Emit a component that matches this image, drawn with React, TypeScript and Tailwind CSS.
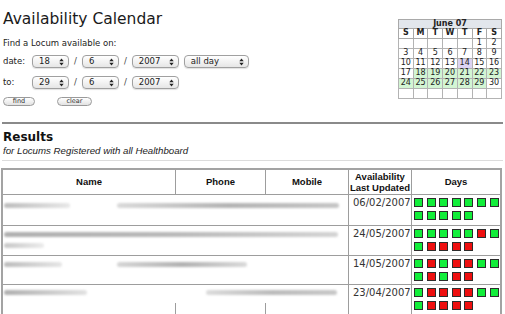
import React from "react"

const sans = "font-['DejaVu_Sans',sans-serif]"
const arial = "font-['Liberation_Sans',Arial,sans-serif]"

function Arrows() {
  return (
    <svg width="5" height="8" viewBox="0 0 5 8" className="shrink-0">
      <polygon points="0.3,3.2 2.5,0.4 4.7,3.2" fill="#222" />
      <polygon points="0.3,4.8 2.5,7.6 4.7,4.8" fill="#222" />
    </svg>
  )
}

function Select({ value, className }: { value: string; className: string }) {
  return (
    <div
      className={`${className} h-[13px] flex items-center justify-between rounded-[4px] border border-[#a0a0a0] bg-linear-to-b from-white to-[#e6e6e6] pl-[6px] pr-[4px] shadow-[0_1px_1px_rgba(0,0,0,0.12)]`}
    >
      <span className="leading-none">{value}</span>
      <Arrows />
    </div>
  )
}

function Slash() {
  return <span className="mx-[5px] text-[#444]">/</span>
}

function PillButton({ label, className }: { label: string; className: string }) {
  return (
    <div
      className={`${className} h-[9px] flex items-center justify-center rounded-full border border-[#9a9a9a] bg-linear-to-b from-white to-[#e2e2e2] text-[6.5px] leading-none text-[#333]`}
    >
      {label}
    </div>
  )
}

const weeks: (number | null)[][] = [
  [null, null, null, null, null, 1, 2],
  [3, 4, 5, 6, 7, 8, 9],
  [10, 11, 12, 13, 14, 15, 16],
  [17, 18, 19, 20, 21, 22, 23],
  [24, 25, 26, 27, 28, 29, 30],
  [null, null, null, null, null, null, null],
]

function dayBg(d: number | null) {
  if (d === 14) return "bg-[#dcd3f3]"
  if (d !== null && d >= 18 && d <= 29) return "bg-[#d3f5d3]"
  return "bg-white"
}

function MiniCalendar() {
  return (
    <table className={`${sans} w-[104px] table-fixed border-collapse border border-[#8f8f8f] text-[8px] text-[#222]`}>
      <thead>
        <tr>
          <th colSpan={7} className="h-[9px] border border-[#a9a9a9] bg-[#e2e6ec] p-0 leading-none font-bold">
            June 07
          </th>
        </tr>
        <tr>
          {["S", "M", "T", "W", "T", "F", "S"].map((d, i) => (
            <th key={i} className="h-[9.5px] border border-[#a9a9a9] bg-white p-0 leading-none font-bold">
              {d}
            </th>
          ))}
        </tr>
      </thead>
      <tbody>
        {weeks.map((w, i) => (
          <tr key={i}>
            {w.map((d, j) => (
              <td
                key={j}
                className={`h-[10px] border border-[#b3b3b3] p-0 text-center leading-none ${dayBg(d)}`}
              >
                {d ?? ""}
              </td>
            ))}
          </tr>
        ))}
      </tbody>
    </table>
  )
}

const G = "bg-[#12ee3a]"
const R = "bg-[#ee0f0f]"

function Squares({ days }: { days: string }) {
  return (
    <div className="flex gap-x-[3.6px]">
      {days.split("").map((c, i) => (
        <div key={i} className={`h-[9px] w-[9px] shrink-0 border border-[#2c2c2c] ${c === "g" ? G : R}`} />
      ))}
    </div>
  )
}

function Days({ days }: { days: string }) {
  return (
    <div className="flex flex-col gap-y-[4px]">
      <Squares days={days.slice(0, 7)} />
      <Squares days={days.slice(7)} />
    </div>
  )
}

const rows = [
  { date: "06/02/2007", days: "gggggggggggg", h: "h-[30px]" },
  { date: "24/05/2007", days: "gggggrggrrrr", h: "h-[29px]" },
  { date: "14/05/2007", days: "grgrrgggrgrr", h: "h-[28px]" },
  { date: "23/04/2007", days: "grrrrgggrrrr", h: "h-[30px]" },
]

const cellB = "border-l border-[#9d9d9d]"
const rowB = "border-t border-[#9d9d9d]"

function BlurRow({ index }: { index: number }) {
  const bar = "h-[5px] blur-[1.2px] rounded-full"
  if (index === 0)
    return (
      <div className="flex pt-[8px]">
        <div className={`${bar} ml-[1px] w-[66px] bg-linear-to-r from-[#bdbdbd] to-[#e8e8e8]`} />
        <div className={`${bar} ml-[47px] w-[222px] bg-linear-to-r from-[#dadada] via-[#b4b4b4] to-[#c6c6c6]`} />
      </div>
    )
  if (index === 1)
    return (
      <div className="flex flex-col gap-[6px] pt-[6px]">
        <div className={`${bar} ml-[1px] w-[334px] bg-linear-to-r from-[#b0b0b0] via-[#b9b9b9] to-[#d4d4d4]`} />
        <div className={`${bar} ml-[1px] w-[40px] bg-linear-to-r from-[#c8c8c8] to-[#ececec]`} />
      </div>
    )
  if (index === 2)
    return (
      <div className="flex pt-[6px]">
        <div className={`${bar} ml-[1px] w-[58px] bg-linear-to-r from-[#bdbdbd] to-[#e6e6e6]`} />
        <div className={`${bar} ml-[55px] w-[130px] bg-linear-to-r from-[#d6d6d6] via-[#b2b2b2] to-[#dadada]`} />
      </div>
    )
  return (
    <div className="flex h-full flex-col">
      <div className="flex h-[18px] pt-[5px]">
        <div className={`${bar} ml-[1px] w-[83px] bg-linear-to-r from-[#b0b0b0] to-[#e2e2e2]`} />
        <div className={`${bar} ml-[119px] w-[131px] bg-linear-to-r from-[#dcdcdc] via-[#bcbcbc] to-[#c8c8c8]`} />
      </div>
      <div className="flex flex-1">
        <div className="w-[172px]" />
        <div className={`w-[90px] ${cellB}`} />
        <div className={`w-[83px] ${cellB}`} />
      </div>
    </div>
  )
}

export default function App() {
  return (
    <div className="relative h-[314px] w-[505px] overflow-hidden bg-white text-[#222]">
      <div className="flex h-[122px]">
        <div className={`${sans} pl-[3px] pt-[10px] text-[8.5px]`}>
          <h1 className="text-[15.5px] leading-[18px] text-[#1a1a1a]">Availability Calendar</h1>
          <p className="mt-[10px] leading-[11px]">Find a Locum available on:</p>
          <div className="mt-[6px] flex items-center">
            <span className="w-[29px]">date:</span>
            <Select value="18" className="w-[37px]" />
            <Slash />
            <Select value="6" className="w-[37px]" />
            <Slash />
            <Select value="2007" className="w-[47px]" />
            <div className="w-[5px]" />
            <Select value="all day" className="w-[65px]" />
          </div>
          <div className="mt-[8px] flex items-center">
            <span className="w-[29px]">to:</span>
            <Select value="29" className="w-[37px]" />
            <Slash />
            <Select value="6" className="w-[37px]" />
            <Slash />
            <Select value="2007" className="w-[47px]" />
          </div>
          <div className="mt-[8px] flex items-center gap-[22px]">
            <PillButton label="find" className="w-[32px]" />
            <PillButton label="clear" className="w-[35px]" />
          </div>
        </div>
        <div className="ml-auto mr-[3px] pt-[19px]">
          <MiniCalendar />
        </div>
      </div>

      <div className="mx-[2px] h-[2px] bg-[#8a8a8a]" />

      <div className="pl-[3px]">
        <h2 className={`${sans} mt-[6px] text-[12px] font-bold leading-[14px] text-[#111]`}>Results</h2>
        <p className={`${arial} mt-px text-[9.7px] italic leading-[11px] text-[#222]`}>
          for Locums Registered with all Healthboard
        </p>
      </div>

      <div className="mx-[2px] mt-[4px] h-px bg-[#dcdcdc]" />

      <table
        className="ml-px mt-[7px] w-[501px] table-fixed border-separate border-spacing-0 border-2 border-[#a3a3a3]"
      >
        <colgroup>
          <col className="w-[172px]" />
          <col className="w-[90px]" />
          <col className="w-[83px]" />
          <col className="w-[63px]" />
          <col className="w-[89px]" />
        </colgroup>
        <thead>
          <tr className={`${arial} text-[9.5px] font-bold leading-[11.5px] text-[#111]`}>
            <th className="h-[24px] p-0 text-center">Name</th>
            <th className={`p-0 text-center ${cellB}`}>Phone</th>
            <th className={`p-0 text-center ${cellB}`}>Mobile</th>
            <th className={`p-0 text-center ${cellB}`}>
              Availability
              <br />
              Last Updated
            </th>
            <th className={`p-0 text-center ${cellB}`}>Days</th>
          </tr>
        </thead>
        <tbody>
          {rows.map((r, i) => (
            <tr key={i}>
              <td colSpan={3} className={`p-0 align-top ${rowB}`}>
                <div className={r.h}>
                  <BlurRow index={i} />
                </div>
              </td>
              <td className={`p-0 align-top ${rowB} ${cellB}`}>
                <div className={`${sans} pl-[4px] pt-[2px] text-[10px] leading-[12px] text-[#333]`}>{r.date}</div>
              </td>
              <td className={`p-0 align-top ${rowB} ${cellB}`}>
                <div className="overflow-hidden pl-[2px] pt-[3px]">
                  <Days days={r.days} />
                </div>
              </td>
            </tr>
          ))}
        </tbody>
      </table>
    </div>
  )
}
